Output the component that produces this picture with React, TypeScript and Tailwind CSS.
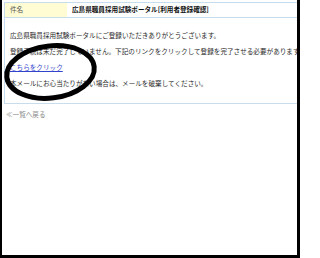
import React from 'react';

const font = { fontFamily: '"Noto Sans CJK JP", "Liberation Sans", sans-serif' };

const App = () => {
  return (
    <div
      className="relative w-[300px] h-[258px] overflow-hidden bg-white border-l-2 border-r-[3px] border-b-[3px] border-black text-[6.6px] text-[#2a2a2a]"
      style={font}
    >
      <div className="pl-[2px] pt-[2px]">
        {/* mail table */}
        <div className="w-[330px] border-l border-t border-b border-[#c9dcec]">
          <div className="flex h-[15px] border-b border-[#c9dcec]">
            <div className="w-[62px] bg-[#fffbd3] pl-[5px] flex items-center text-[#555]">件名</div>
            <div className="flex-1 pl-[5px] flex items-center font-bold text-[#111]">
              広島県職員採用試験ポータル[利用者登録確認]
            </div>
          </div>
          <div className="pl-[5px] pt-[9px] pb-[12px] leading-[16px] whitespace-nowrap">
            <p>広島県職員採用試験ポータルにご登録いただきありがとうございます。</p>
            <p>登録手続は未だ完了していません。下記のリンクをクリックして登録を完了させる必要があります。</p>
            <p>
              <a href="#" className="text-[#3344cc] underline">こちらをクリック</a>
            </p>
            <p>本メールにお心当たりがない場合は、メールを破棄してください。</p>
          </div>
        </div>

        <div className="pl-[2px] pt-[5px] text-[#888] leading-[10px]">≪一覧へ戻る</div>
      </div>

      {/* hand drawn circle */}
      <svg className="absolute left-0 top-0 pointer-events-none" width="300" height="258">
        <ellipse
          cx="48.5"
          cy="72"
          rx="44"
          ry="26"
          transform="rotate(-7 48.5 72)"
          fill="none"
          stroke="#000"
          strokeWidth="5"
        />
      </svg>
    </div>
  );
};

export default App;
